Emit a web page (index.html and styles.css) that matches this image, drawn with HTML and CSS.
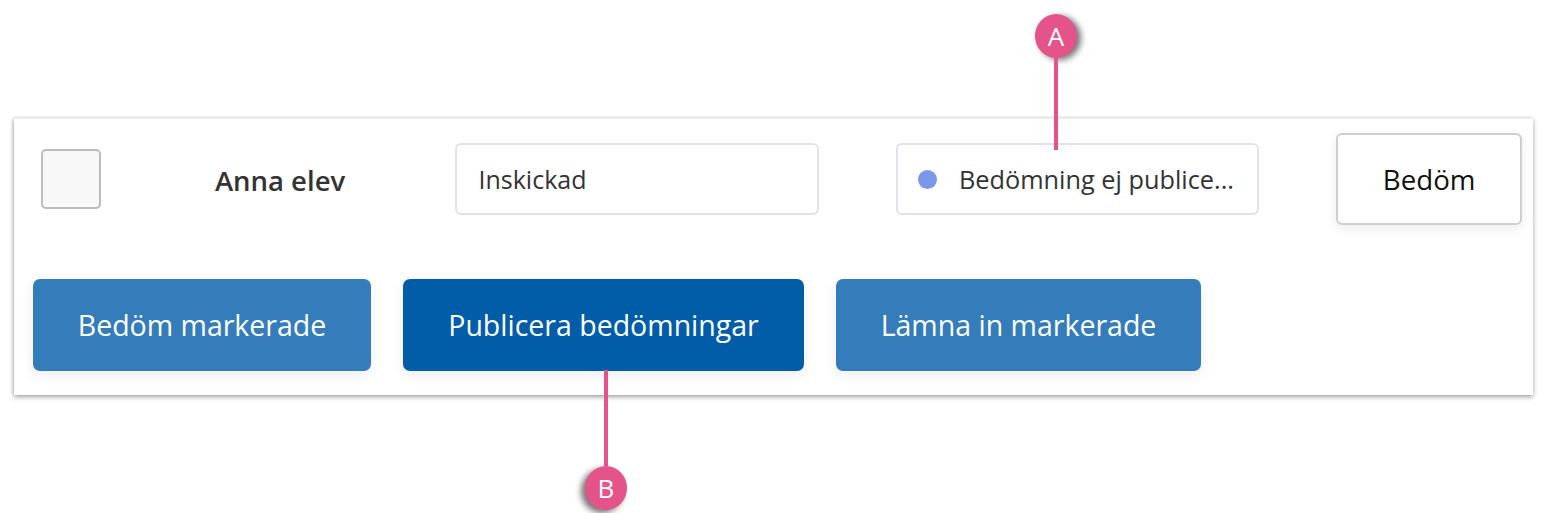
FILE: index.html
```html
<!DOCTYPE html>
<html lang="sv">
<head>
<meta charset="utf-8">
<title>Bedömning</title>
<link rel="stylesheet" href="styles.css">
</head>
<body>
<div class="page">
  <div class="card">
    <div class="row">
      <div class="checkbox"></div>
      <div class="name">Anna elev</div>
      <div class="field">Inskickad</div>
      <div class="field status"><span class="dot"></span><span class="status-text">Bedömning ej publice...</span></div>
      <button class="assess">Bedöm</button>
    </div>
    <div class="actions">
      <button class="btn btn-1">Bedöm markerade</button>
      <button class="btn btn-2 primary">Publicera bedömningar</button>
      <button class="btn btn-3">Lämna in markerade</button>
    </div>
  </div>
  <div class="callout callout-a"><span class="pin">A</span><span class="stem"></span></div>
  <div class="callout callout-b"><span class="stem"></span><span class="pin">B</span></div>
</div>
</body>
</html>
```
FILE: styles.css
```css
html, body {
  margin: 0;
  padding: 0;
  background: #ffffff;
  font-family: "Open Sans", "Noto Sans", "Liberation Sans", sans-serif;
}
.page {
  position: relative;
  width: 1551px;
  height: 513px;
  padding: 118px 0 0 14px;
  box-sizing: border-box;
}
.card {
  width: 1519px;
  height: 277px;
  box-sizing: border-box;
  background: #fff;
  border-top: 1px solid #f0f0f0;
  box-shadow: 0 2px 5px rgba(0,0,0,0.35), -1px 0 3px rgba(0,0,0,0.12);
  padding: 14px 11px 24px 27px;
  display: flex;
  flex-direction: column;
  gap: 54px;
}
.row {
  display: flex;
  align-items: center;
  height: 92px;
}
.checkbox {
  width: 60px;
  height: 60px;
  box-sizing: border-box;
  border: 2px solid #bdbdbd;
  border-radius: 5px;
  background: #f8f8f8;
  margin-right: 114px;
}
.name {
  width: 241px;
  font-size: 27.5px;
  font-weight: 600;
  color: #333333;
  padding-top: 2px;
}
.field {
  width: 364px;
  height: 72px;
  box-sizing: border-box;
  border: 2px solid #e2e2e8;
  border-radius: 6px;
  display: flex;
  align-items: center;
  padding-left: 21px;
  font-size: 25px;
  color: #333333;
  white-space: nowrap;
  overflow: hidden;
}
.status {
  margin-left: 77px;
  padding-left: 20px;
}
.status .status-text {
  font-size: 25.3px;
}
.dot {
  width: 19px;
  height: 19px;
  border-radius: 50%;
  background: #7a97ea;
  margin-right: 22px;
  flex: none;
}
.assess {
  margin-left: 77px;
  width: 186px;
  height: 92px;
  box-sizing: border-box;
  border: 2px solid #cfcfcf;
  border-radius: 6px;
  background: #fff;
  box-shadow: 0 4px 12px rgba(0,0,0,0.08);
  font-family: inherit;
  font-size: 27.7px;
  color: #111111;
  padding: 0;
}
.actions {
  display: flex;
  gap: 32px;
  margin-left: -8px;
}
.btn {
  height: 92px;
  border: none;
  border-radius: 7px;
  background: #347dba;
  color: #fff;
  font-family: inherit;
  font-size: 28.5px;
  padding: 0;
  box-shadow: 0 4px 14px rgba(0,0,0,0.08);
}
.btn-1 { width: 338px; }
.btn-2 { width: 401px; }
.btn-3 { width: 365px; }
.primary { background: #025da9; }

.callout {
  position: absolute;
  display: flex;
  flex-direction: column;
  align-items: center;
}
.pin {
  width: 42px;
  height: 44px;
  border-radius: 50%;
  background: #e4548b;
  color: #fff;
  font-size: 26px;
  font-weight: 500;
  display: flex;
  align-items: center;
  justify-content: center;
  line-height: 1;
}
.stem {
  width: 4px;
  background: #e4548b;
}
.callout-a {
  left: 1035px;
  top: 14px;
}
.callout-a .pin { box-shadow: 4px 2px 6px rgba(0,0,0,0.55); }
.callout-a .stem { height: 92px; }
.callout-b {
  left: 585px;
  top: 370px;
}
.callout-b .pin { box-shadow: -4px 3px 6px rgba(0,0,0,0.55); }
.callout-b .stem { height: 96px; }
```
